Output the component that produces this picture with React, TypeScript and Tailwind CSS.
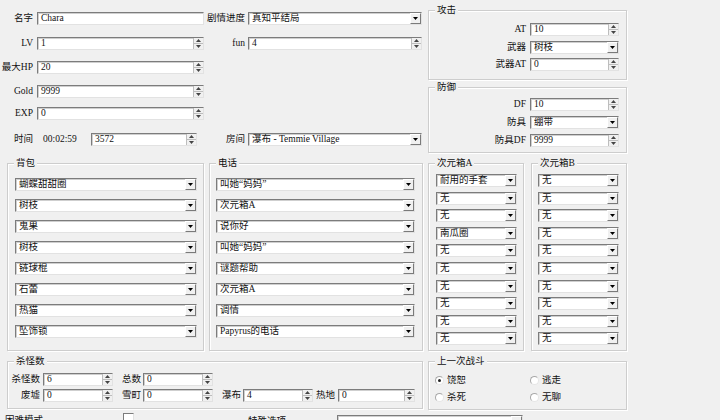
import React from "react";

type Kind = "text" | "spin" | "combo";

function UpDown() {
  return (
    <div className="w-[10px] shrink-0 bg-[#f0f0f0] border-l border-[#bdbdbd] flex flex-col">
      <div className="flex-1 flex items-center justify-center border-b border-[#bdbdbd]">
        <svg width="5" height="3" viewBox="0 0 5 3">
          <path d="M2.5 0L5 3H0z" fill="#444" />
        </svg>
      </div>
      <div className="flex-1 flex items-center justify-center">
        <svg width="5" height="3" viewBox="0 0 5 3">
          <path d="M0 0H5L2.5 3z" fill="#444" />
        </svg>
      </div>
    </div>
  );
}

function DropBtn() {
  return (
    <div className="w-[11px] shrink-0 bg-[#f0f0f0] border border-t-white border-l-white border-r-[#7a7a7a] border-b-[#7a7a7a] flex items-center justify-center">
      <svg width="5" height="3" viewBox="0 0 5 3">
        <path d="M0 0H5L2.5 3z" fill="#000" />
      </svg>
    </div>
  );
}

function Field({ cls, value, kind = "text" }: { cls: string; value: string; kind?: Kind }) {
  return (
    <div
      className={`flex h-[13px] shrink-0 bg-white border border-t-[#7c7c7c] border-l-[#7c7c7c] border-r-[#e2e2e2] border-b-[#e2e2e2] shadow-[inset_1px_1px_0_#cfcfcf] ${cls}`}
    >
      <div className="flex-1 min-w-0 pl-[3px] leading-[11px] whitespace-nowrap overflow-hidden">{value}</div>
      {kind === "spin" && <UpDown />}
      {kind === "combo" && <DropBtn />}
    </div>
  );
}

function Group({ title, cls, children }: { title: string; cls: string; children?: React.ReactNode }) {
  return (
    <div className={`relative shrink-0 border border-[#cdcdcd] shadow-[inset_1px_1px_0_#ffffff,1px_1px_0_#ffffff] ${cls}`}>
      <span className="absolute left-[6px] -top-[7px] bg-[#f0f0f0] px-[2px] leading-[13px] whitespace-nowrap">
        {title}
      </span>
      {children}
    </div>
  );
}

function Radio({ checked, label }: { checked?: boolean; label: string }) {
  return (
    <div className="flex items-center h-[13px]">
      <div className="w-[9px] h-[9px] rounded-full bg-white border border-[#a8a8a8] border-b-[#e6e6e6] border-r-[#e6e6e6] flex items-center justify-center">
        {checked && <div className="w-[3px] h-[3px] rounded-full bg-[#222]" />}
      </div>
      <span className="ml-[3px] leading-[13px]">{label}</span>
    </div>
  );
}

const bag = ["蝴蝶甜甜圈", "树枝", "鬼果", "树枝", "链球棍", "石蕾", "热猫", "坠饰锁"];
const phone = ["叫她“妈妈”", "次元箱A", "说你好", "叫她“妈妈”", "谜题帮助", "次元箱A", "调情", "Papyrus的电话"];
const boxA = ["耐用的手套", "无", "无", "南瓜圈", "无", "无", "无", "无", "无", "无"];
const boxB = ["无", "无", "无", "无", "无", "无", "无", "无", "无", "无"];

export default function App() {
  return (
    <div className="w-[720px] h-[420px] overflow-hidden bg-[#f0f0f0] text-[9.5px] leading-[13px] text-[#111] font-['Liberation_Serif','Noto_Sans_CJK_SC',serif]">
      {/* top area */}
      <div className="flex pt-[10px]">
        <div className="w-[428px] shrink-0 flex flex-col pt-[2px]">
          <div className="flex items-center">
            <span className="w-[37px] pr-[4px] text-right">名字</span>
            <Field cls="w-[167px]" value="Chara" />
            <span className="w-[44px] pr-[3px] text-right whitespace-nowrap">剧情进度</span>
            <Field cls="w-[174px]" value="真知平结局" kind="combo" />
          </div>
          <div className="flex items-center mt-[12px]">
            <span className="w-[37px] pr-[4px] text-right">LV</span>
            <Field cls="w-[167px]" value="1" kind="spin" />
            <span className="w-[44px] pr-[3px] text-right">fun</span>
            <Field cls="w-[174px]" value="4" kind="spin" />
          </div>
          <div className="flex items-center mt-[11px]">
            <span className="w-[37px] pr-[4px] text-right whitespace-nowrap">最大HP</span>
            <Field cls="w-[167px]" value="20" kind="spin" />
          </div>
          <div className="flex items-center mt-[11px]">
            <span className="w-[37px] pr-[4px] text-right">Gold</span>
            <Field cls="w-[167px]" value="9999" kind="spin" />
          </div>
          <div className="flex items-center mt-[9px]">
            <span className="w-[37px] pr-[4px] text-right">EXP</span>
            <Field cls="w-[167px]" value="0" kind="spin" />
          </div>
          <div className="flex items-center mt-[13px]">
            <span className="w-[37px] pr-[4px] text-right">时间</span>
            <span className="w-[54px] pl-[6px]">00:02:59</span>
            <Field cls="w-[106px]" value="3572" kind="spin" />
            <span className="w-[51px] pr-[3px] text-right">房间</span>
            <Field cls="w-[174px]" value="瀑布 - Temmie Village" kind="combo" />
          </div>
        </div>

        <div className="w-[199px] shrink-0 flex flex-col">
          <Group title="攻击" cls="h-[70px] pt-[12px] flex flex-col gap-[4.5px]">
            <div className="flex items-center">
              <span className="w-[101px] pr-[4px] text-right">AT</span>
              <Field cls="w-[89px]" value="10" kind="spin" />
            </div>
            <div className="flex items-center">
              <span className="w-[101px] pr-[4px] text-right">武器</span>
              <Field cls="w-[89px]" value="树枝" kind="combo" />
            </div>
            <div className="flex items-center">
              <span className="w-[101px] pr-[4px] text-right">武器AT</span>
              <Field cls="w-[89px]" value="0" kind="spin" />
            </div>
          </Group>
          <Group title="防御" cls="mt-[7px] h-[66px] pt-[10px] flex flex-col gap-[5px]">
            <div className="flex items-center">
              <span className="w-[101px] pr-[4px] text-right">DF</span>
              <Field cls="w-[89px]" value="10" kind="spin" />
            </div>
            <div className="flex items-center">
              <span className="w-[101px] pr-[4px] text-right">防具</span>
              <Field cls="w-[89px]" value="绷带" kind="combo" />
            </div>
            <div className="flex items-center">
              <span className="w-[101px] pr-[4px] text-right">防具DF</span>
              <Field cls="w-[89px]" value="9999" kind="spin" />
            </div>
          </Group>
        </div>
      </div>

      {/* lists */}
      <div className="flex mt-[10px] pl-[7px]">
        <Group title="背包" cls="w-[197px] h-[188px] pt-[14px] pl-[7px] flex flex-col gap-[8px]">
          {bag.map((v, i) => (
            <Field key={i} cls="w-[182px]" value={v} kind="combo" />
          ))}
        </Group>
        <Group title="电话" cls="ml-[5px] w-[214px] h-[188px] pt-[14px] pl-[6px] flex flex-col gap-[8px]">
          {phone.map((v, i) => (
            <Field key={i} cls="w-[199px]" value={v} kind="combo" />
          ))}
        </Group>
        <Group title="次元箱A" cls="ml-[5px] w-[96px] h-[188px] pt-[10px] pl-[7px] flex flex-col gap-[4.6px]">
          {boxA.map((v, i) => (
            <Field key={i} cls="w-[81px]" value={v} kind="combo" />
          ))}
        </Group>
        <Group title="次元箱B" cls="ml-[7px] w-[96px] h-[188px] pt-[10px] pl-[6px] flex flex-col gap-[4.6px]">
          {boxB.map((v, i) => (
            <Field key={i} cls="w-[81px]" value={v} kind="combo" />
          ))}
        </Group>
      </div>

      {/* kills + last battle */}
      <div className="flex mt-[10px] pl-[7px]">
        <Group title="杀怪数" cls="w-[416px] h-[48px] pt-[11px] flex flex-col gap-[3px]">
          <div className="flex items-center">
            <span className="w-[35px] pr-[3px] text-right whitespace-nowrap">杀怪数</span>
            <Field cls="w-[70px]" value="6" kind="spin" />
            <span className="w-[30px] pr-[2px] text-right">总数</span>
            <Field cls="w-[70px]" value="0" kind="spin" />
          </div>
          <div className="flex items-center">
            <span className="w-[35px] pr-[3px] text-right">废墟</span>
            <Field cls="w-[70px]" value="0" kind="spin" />
            <span className="w-[30px] pr-[2px] text-right">雪町</span>
            <Field cls="w-[70px]" value="0" kind="spin" />
            <span className="w-[30px] pr-[2px] text-right">瀑布</span>
            <Field cls="w-[70px]" value="4" kind="spin" />
            <span className="w-[25px] pr-[3px] text-right">热地</span>
            <Field cls="w-[77px]" value="0" kind="spin" />
          </div>
        </Group>
        <Group title="上一次战斗" cls="ml-[5px] w-[199px] h-[49px] pt-[12px] pl-[6px] flex flex-col gap-[4px]">
          <div className="flex">
            <div className="w-[95px]">
              <Radio checked label="饶恕" />
            </div>
            <Radio label="逃走" />
          </div>
          <div className="flex">
            <div className="w-[95px]">
              <Radio label="杀死" />
            </div>
            <Radio label="无聊" />
          </div>
        </Group>
      </div>

      {/* last row (cut off) */}
      <div className="flex items-start mt-[3px] pl-[5px]">
        <span className="w-[118px] leading-[13px] mt-[1px]">困难模式</span>
        <div className="w-[11px] h-[11px] bg-white border border-t-[#7c7c7c] border-l-[#7c7c7c] border-r-[#e2e2e2] border-b-[#e2e2e2]" />
        <span className="ml-[114px] w-[89px] leading-[13px] mt-[2px]">特殊选项</span>
        <div className="mt-[2px]">
          <Field cls="w-[186px]" value="" kind="combo" />
        </div>
      </div>
    </div>
  );
}
